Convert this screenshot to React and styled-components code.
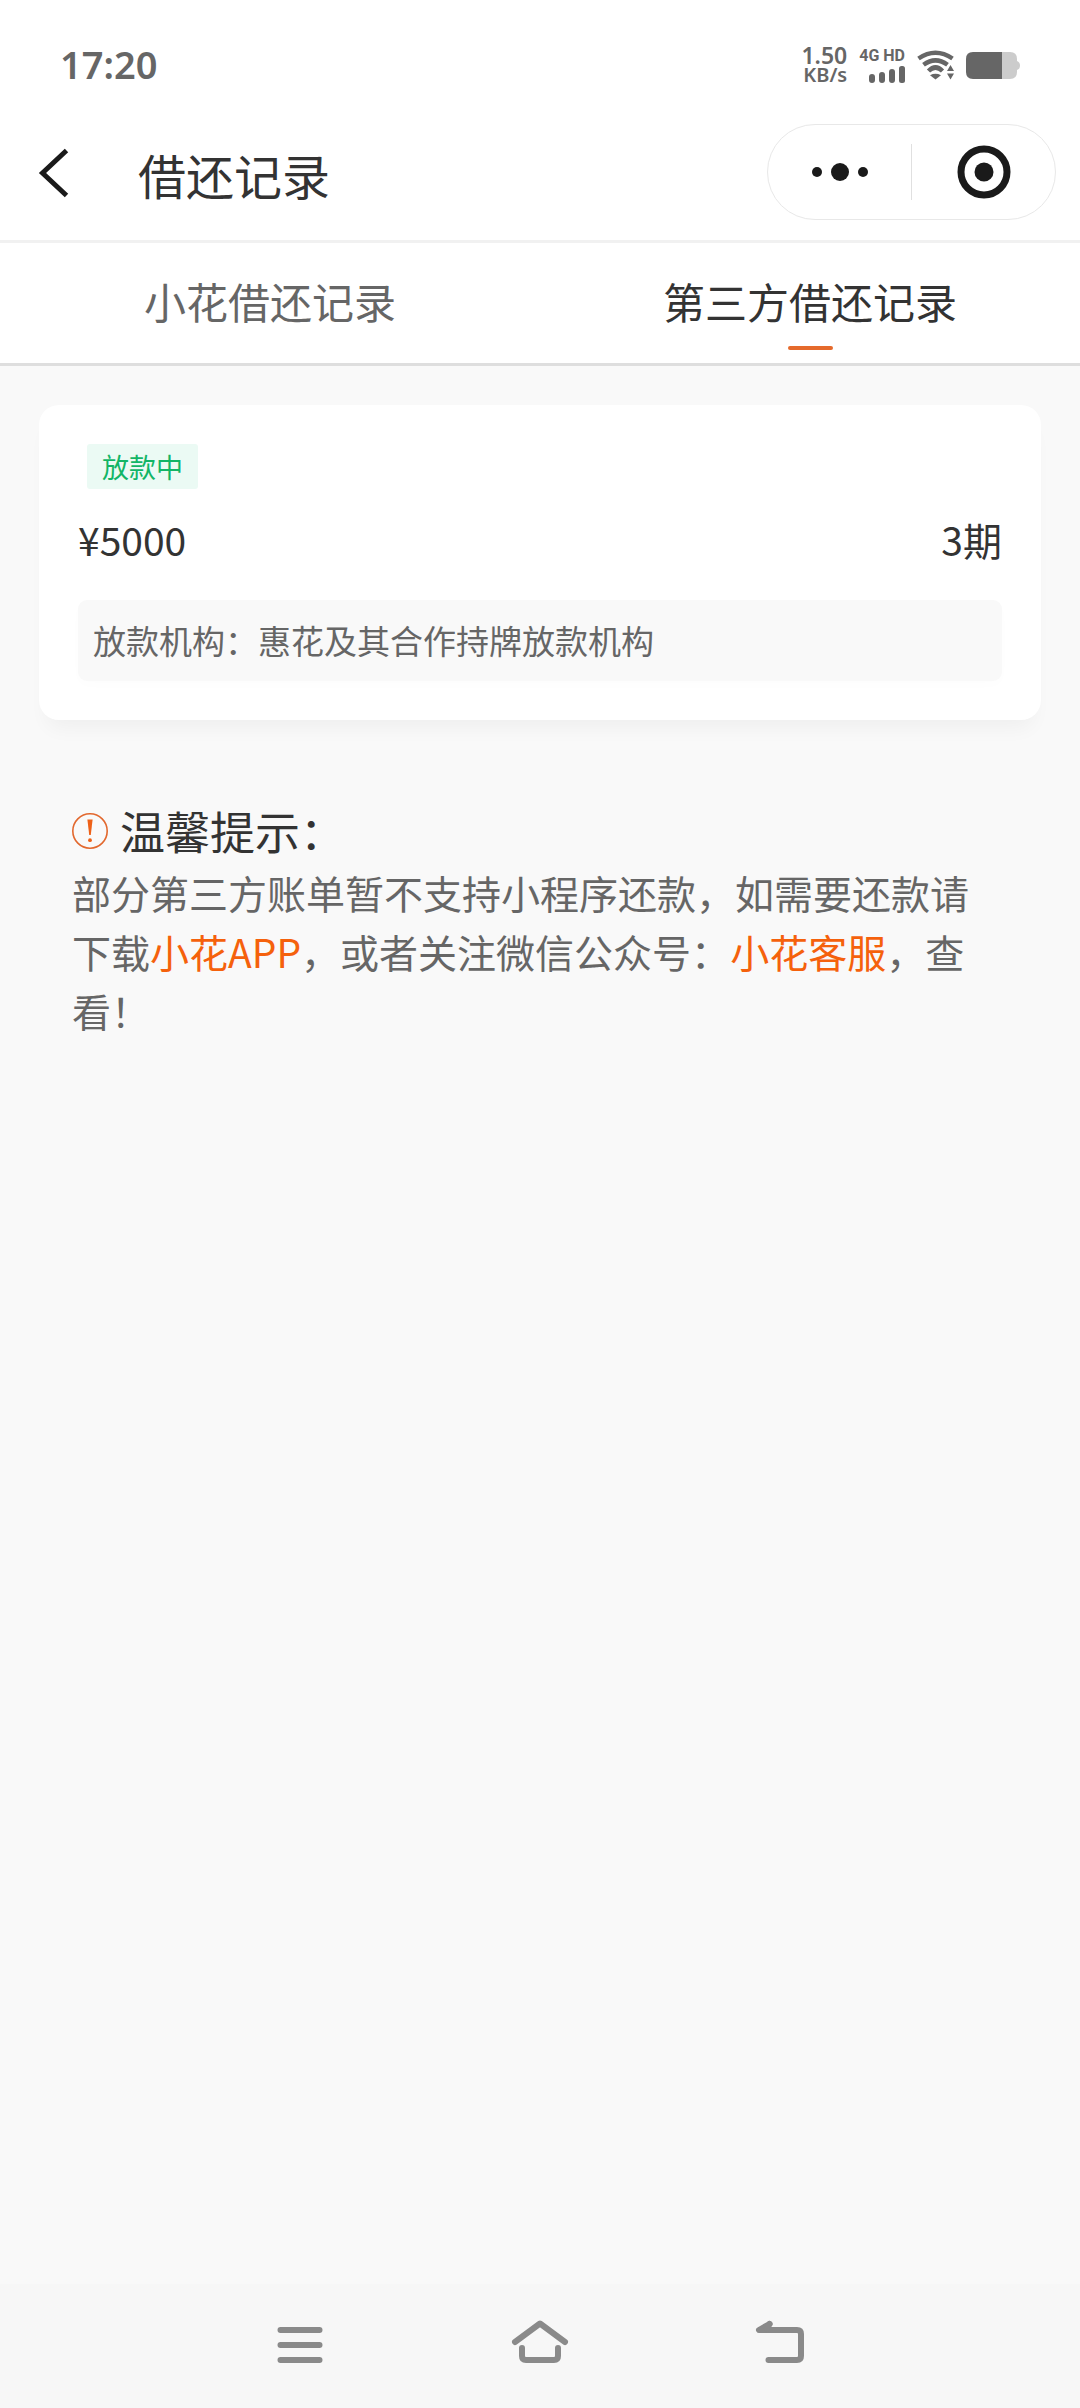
import React from 'react';
import styled, { createGlobalStyle } from 'styled-components';

const GlobalStyle = createGlobalStyle`
  * {
    box-sizing: border-box;
  }

  body {
    margin: 0;
    background: #f9f9f9;
    color: #333;
    font-family: 'Noto Sans CJK SC', sans-serif;
  }

  h1, h2, p, dl, dd {
    margin: 0;
    font-weight: 400;
  }

  button {
    padding: 0;
    border: 0;
    background: none;
    color: inherit;
    font: inherit;
    cursor: pointer;
  }

  svg {
    display: block;
  }
`;

const Page = styled.div`
  display: flex;
  flex-direction: column;
  min-height: 100vh;
`;

const StatusBar = styled.div`
  display: flex;
  align-items: center;
  justify-content: space-between;
  height: 104px;
  padding: 24px 60px 0;
  background: #fff;
  color: #666;
  font-family: 'Noto Sans', sans-serif;
  font-weight: 600;
`;

const Clock = styled.time`
  font-size: 38px;
  line-height: 56px;
`;

const StatusIcons = styled.div`
  display: flex;
  align-items: center;
  gap: 12px;
  padding-top: 2px;
`;

const Speed = styled.div`
  display: flex;
  flex-direction: column;
  align-items: flex-end;
  font-size: 20px;
  line-height: 19px;
`;

const SpeedValue = styled.span`
  font-size: 23px;
`;

const Signal = styled.div`
  display: flex;
  flex-direction: column;
  align-items: flex-end;
  gap: 2px;
  font-family: Roboto, sans-serif;
  font-size: 16px;
  font-weight: 700;
  line-height: 16px;
`;

const Header = styled.header`
  display: flex;
  align-items: center;
  height: 139px;
  padding: 0 24px;
  background: #fff;
  border-bottom: 3px solid #f1f1f1;
`;

const BackButton = styled.button`
  width: 60px;
  height: 60px;
`;

const Title = styled.h1`
  flex: 1;
  padding: 4px 0 0 54px;
  font-size: 48px;
  line-height: 72px;
`;

const Capsule = styled.div`
  display: flex;
  align-items: center;
  width: 289px;
  height: 96px;
  border: 1px solid #e8e8e8;
  border-radius: 48px;
`;

const CapsuleButton = styled.button`
  display: flex;
  flex: 1;
  align-items: center;
  justify-content: center;
  height: 56px;

  & + & {
    border-left: 1px solid #e0e0e0;
  }
`;

const Tabs = styled.div`
  display: flex;
  height: 123px;
  background: #fff;
  border-bottom: 3px solid #dedede;
`;

const Tab = styled.button`
  display: flex;
  flex: 1;
  flex-direction: column;
  align-items: center;
  justify-content: flex-end;
  gap: 15px;
  padding-bottom: 13px;
  color: ${({ $active }) => ($active ? '#333' : '#666')};
  font-size: 42px;
  line-height: 60px;

  &::after {
    content: '';
    width: 45px;
    height: 4px;
    border-radius: 2px;
    background: ${({ $active }) => ($active ? '#e56a2c' : 'transparent')};
  }
`;

const Content = styled.main`
  flex: 1;
  padding: 39px;
`;

const Card = styled.article`
  padding: 39px;
  background: #fff;
  border-radius: 20px;
  box-shadow: 0 16px 20px -8px rgba(0, 0, 0, 0.045);
`;

const Tag = styled.span`
  display: block;
  width: fit-content;
  margin-left: 9px;
  padding: 0 15px;
  border-radius: 3px;
  background: #ebfaf4;
  color: #12b566;
  font-size: 27px;
  line-height: 45px;
`;

const Summary = styled.div`
  display: flex;
  justify-content: space-between;
  padding: 20px 0 31px;
  font-size: 39px;
  line-height: 60px;
`;

const Lender = styled.dl`
  display: flex;
  padding: 15px;
  border-radius: 9px;
  background: #f9f9f9;
  box-shadow: 0 4px 12px rgba(0, 0, 0, 0.01);
  color: #666;
  font-size: 33px;
  line-height: 51px;
`;

const Tips = styled.section`
  padding: 79px 45px 0 33px;
`;

const TipsHeading = styled.div`
  display: flex;
  align-items: center;
  gap: 12px;
`;

const TipsTitle = styled.h2`
  font-size: 45px;
  line-height: 64px;
`;

const TipsText = styled.p`
  color: #666;
  font-size: 39px;
  line-height: 59px;
`;

const Link = styled.a`
  color: #f5610c;
  text-decoration: none;
`;

const SystemNav = styled.nav`
  display: flex;
  justify-content: center;
  height: 124px;
  background: #f7f7f7;
`;

const NavButton = styled.button`
  display: flex;
  align-items: center;
  justify-content: center;
  width: 240px;
  padding-bottom: 8px;
`;

const SignalIcon = () => (
  <svg width="36" height="17" viewBox="0 0 36 17" fill="#666">
    <rect x="0" y="8" width="6" height="9" rx="3" />
    <rect x="10" y="6" width="6" height="11" rx="3" />
    <rect x="20" y="3" width="6" height="14" rx="3" />
    <rect x="30" y="0" width="6" height="17" rx="2.5" />
  </svg>
);

const WifiIcon = () => (
  <svg width="37" height="30" viewBox="0 0 37 30" fill="none" stroke="#666" strokeWidth="4.5">
    <path d="M1.5 8.5Q18.5 -3 35.5 8.5" />
    <path d="M6.5 14.8Q18.5 6 30.5 14.8" />
    <path d="M11.5 21Q18.5 14 25.5 21" />
    <path d="M13 25.2Q18.5 22.500 24 25.2L18.500 29.5Z" fill="#666" stroke="none" />
    <path d="M33.5 15L37 21H30ZM33.5 29.5L37 23.5H30Z" fill="#666" stroke="none" />
  </svg>
);

const BatteryIcon = () => (
  <svg width="54" height="27" viewBox="0 0 54 27">
    <path d="M35 0H44Q51 0 51 7V9Q54 10 54 13.5T51 18V20Q51 27 44 27H35Z" fill="#ccc" />
    <path d="M7 0H36V27H7Q0 27 0 20V7Q0 0 7 0Z" fill="#666" />
  </svg>
);

const BackIcon = () => (
  <svg width="60" height="60" viewBox="0 0 60 60" fill="none" stroke="#1a1a1a" strokeWidth="5">
    <path d="M42.5 8.5L18.5 31L42.5 53.5" />
  </svg>
);

const MoreIcon = () => (
  <svg width="56" height="18" viewBox="0 0 56 18" fill="#1a1a1a">
    <circle cx="5" cy="9" r="5" />
    <circle cx="28" cy="9" r="9" />
    <circle cx="51" cy="9" r="5" />
  </svg>
);

const CloseIcon = () => (
  <svg width="54" height="54" viewBox="0 0 54 54">
    <circle cx="27" cy="27" r="23" fill="none" stroke="#1a1a1a" strokeWidth="7" />
    <circle cx="27" cy="27" r="9.5" fill="#1a1a1a" />
  </svg>
);

const AlertIcon = () => (
  <svg width="36" height="36" viewBox="0 0 36 36">
    <circle cx="18" cy="18" r="17.2" fill="none" stroke="#e2682e" strokeWidth="1.6" />
    <path d="M15.4 6.5H20.6L18.8 22H17.2Z" fill="#ee6118" />
    <circle cx="18" cy="27.2" r="1.9" fill="#ee6118" />
  </svg>
);

const navIcon = {
  width: 58,
  height: 44,
  viewBox: '0 0 58 44',
  fill: 'none',
  stroke: '#8a8a8a',
  strokeWidth: 6,
  strokeLinecap: 'round',
  strokeLinejoin: 'round',
};

const MenuIcon = () => (
  <svg {...navIcon}>
    <path d="M9.5 10H48.5M9.5 25H48.5M9.5 40H48.5" />
  </svg>
);

const HomeIcon = () => (
  <svg {...navIcon}>
    <path d="M4 22L29 3.5L54 22" />
    <path d="M11 28V36Q11 40 15 40H43Q47 40 47 36V28" />
  </svg>
);

const ReturnIcon = () => (
  <svg {...navIcon}>
    <path d="M18.5 4L8 10H46Q50 10 50 14V36Q50 40 46 40H17.5" />
    <path d="M18.5 4L16 9" />
  </svg>
);

const tabs = [
  { label: '小花借还记录', active: false },
  { label: '第三方借还记录', active: true },
];

const navItems = [
  { label: '最近任务', Icon: MenuIcon },
  { label: '主屏幕', Icon: HomeIcon },
  { label: '返回', Icon: ReturnIcon },
];

const App = () => {
  return (
    <Page>
      <GlobalStyle />
      <StatusBar>
        <Clock>17:20</Clock>
        <StatusIcons>
          <Speed>
            <SpeedValue>1.50</SpeedValue>
            <span>KB/s</span>
          </Speed>
          <Signal>
            <span>4G HD</span>
            <SignalIcon />
          </Signal>
          <WifiIcon />
          <BatteryIcon />
        </StatusIcons>
      </StatusBar>
      <Header>
        <BackButton type="button" aria-label="返回上一页">
          <BackIcon />
        </BackButton>
        <Title>借还记录</Title>
        <Capsule>
          <CapsuleButton type="button" aria-label="更多">
            <MoreIcon />
          </CapsuleButton>
          <CapsuleButton type="button" aria-label="关闭">
            <CloseIcon />
          </CapsuleButton>
        </Capsule>
      </Header>
      <Tabs role="tablist">
        {tabs.map(({ label, active }) => (
          <Tab key={label} type="button" role="tab" aria-selected={active} $active={active}>
            {label}
          </Tab>
        ))}
      </Tabs>
      <Content>
        <Card>
          <Tag>放款中</Tag>
          <Summary>
            <span>¥5000</span>
            <span>3期</span>
          </Summary>
          <Lender>
            <dt>放款机构：</dt>
            <dd>惠花及其合作持牌放款机构</dd>
          </Lender>
        </Card>
        <Tips>
          <TipsHeading>
            <AlertIcon />
            <TipsTitle>温馨提示：</TipsTitle>
          </TipsHeading>
          <TipsText>
            部分第三方账单暂不支持小程序还款，如需要还款请下载
            <Link href="#app">小花APP</Link>，或者关注微信公众号：
            <Link href="#service">小花客服</Link>，查看！
          </TipsText>
        </Tips>
      </Content>
      <SystemNav>
        {navItems.map(({ label, Icon }) => (
          <NavButton key={label} type="button" aria-label={label}>
            <Icon />
          </NavButton>
        ))}
      </SystemNav>
    </Page>
  );
};

export default App;
